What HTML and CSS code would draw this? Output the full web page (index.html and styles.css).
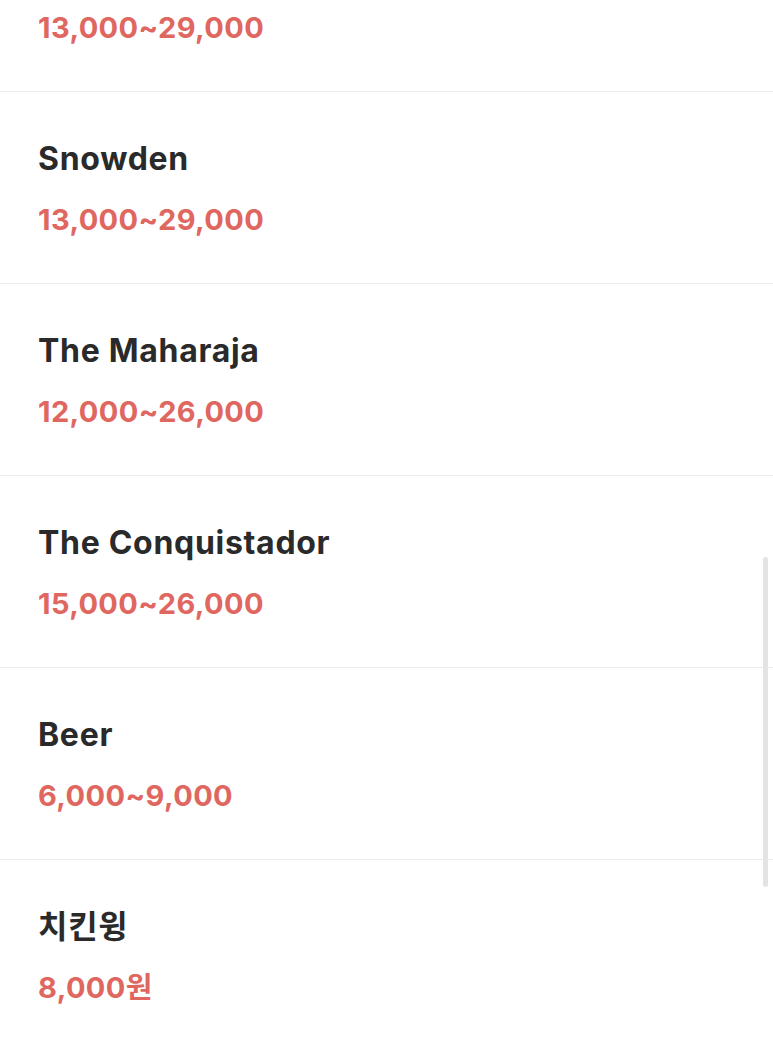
FILE: index.html
```html
<!DOCTYPE html>
<html lang="ko">
<head>
<meta charset="utf-8">
<title>Menu</title>
<link rel="stylesheet" href="styles.css">
</head>
<body>
<div class="viewport">
  <ul class="menu">
    <li class="item item-partial"><div class="price">13,000~29,000</div></li>
    <li class="item"><div class="name">Snowden</div><div class="price">13,000~29,000</div></li>
    <li class="item"><div class="name">The Maharaja</div><div class="price">12,000~26,000</div></li>
    <li class="item"><div class="name">The Conquistador</div><div class="price">15,000~26,000</div></li>
    <li class="item"><div class="name">Beer</div><div class="price">6,000~9,000</div></li>
    <li class="item"><div class="name">치킨윙</div><div class="price">8,000원</div></li>
  </ul>
  <div class="scrollbar"></div>
</div>
</body>
</html>
```
FILE: styles.css
```css
html, body {
  margin: 0;
  padding: 0;
  background: #ffffff;
}
.viewport {
  position: relative;
  width: 773px;
  height: 1043px;
  overflow: hidden;
  font-family: Inter, "Noto Sans CJK KR", sans-serif;
}
.menu {
  list-style: none;
  margin: 0;
  padding: 0;
}
.item {
  display: flex;
  flex-direction: column;
  gap: 24px;
  padding: 48px 0 46px 38px;
  border-bottom: 1px solid #ebebeb;
}
.item-partial {
  padding-top: 10px;
}
.name {
  font-size: 32px;
  line-height: 38px;
  font-weight: 700;
  color: #2a2a2a;
  letter-spacing: 0.7px;
}
.price {
  font-size: 29px;
  line-height: 35px;
  font-weight: 700;
  color: #e0675f;
  letter-spacing: 0.4px;
}
.scrollbar {
  position: absolute;
  right: 5px;
  top: 557px;
  width: 5px;
  height: 330px;
  border-radius: 3px;
  background: #e3e3e3;
}
```
